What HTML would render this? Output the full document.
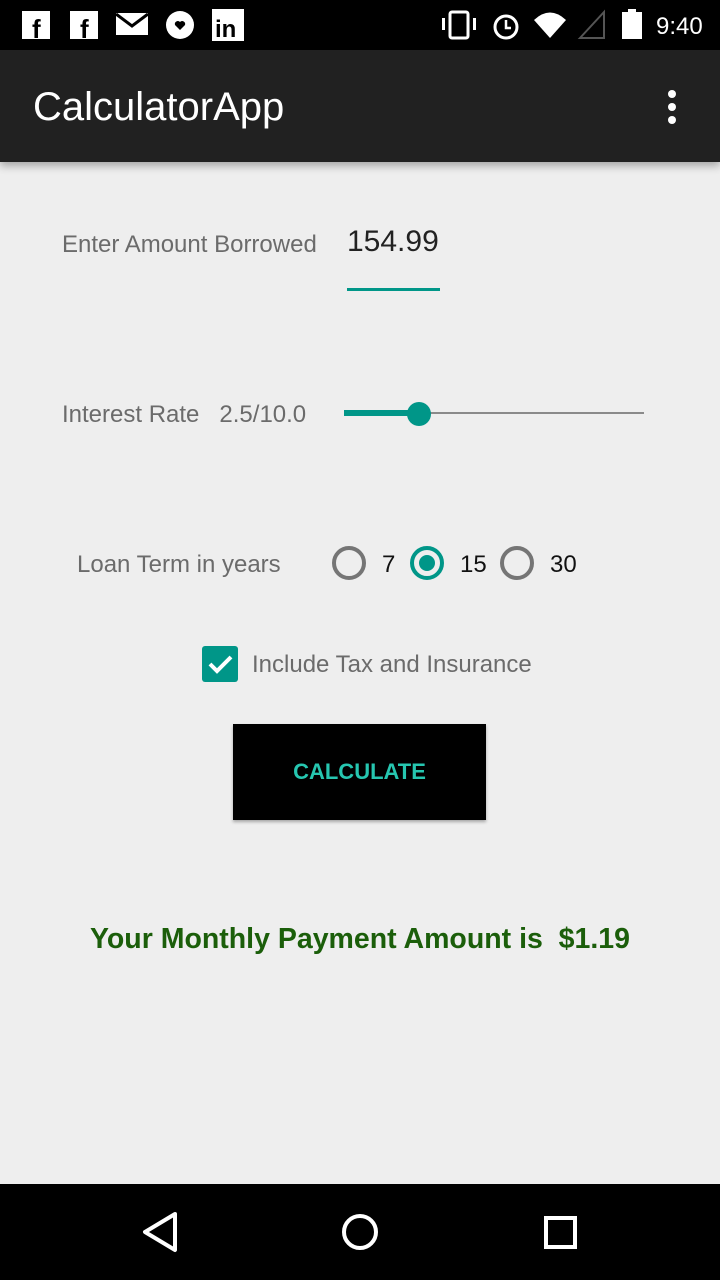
<!DOCTYPE html>
<html><head><style>
body{margin:0;width:720px;height:1280px;background:#eeeeee;font-family:"Liberation Sans",sans-serif;position:relative;overflow:hidden}
.a{position:absolute}
.radio{position:absolute;width:34px;height:34px;border-radius:50%;box-sizing:border-box;border:4px solid #757575}
</style></head><body>
<div class="a" style="left:0;top:0;width:720px;height:50px;background:#000"></div>
<svg class="a" style="left:0;top:0" width="720" height="50">
<rect x="22" y="11" width="28" height="28" fill="#fff"/><text x="32" y="38" font-size="26" font-weight="bold" fill="#000" font-family="Liberation Sans">f</text>
<rect x="70" y="11" width="28" height="28" fill="#fff"/><text x="80" y="38" font-size="26" font-weight="bold" fill="#000" font-family="Liberation Sans">f</text>
<rect x="116" y="13" width="32" height="22" fill="#fff"/><path d="M116 14 L132 26 L148 14" stroke="#000" stroke-width="3" fill="none"/>
<circle cx="180" cy="25" r="14" fill="#fff"/><path d="M180 30 l-5 -5 a3 3 0 0 1 5 -3 a3 3 0 0 1 5 3z" fill="#000"/>
<rect x="212" y="9" width="32" height="32" fill="#fff"/><text x="215" y="37" font-size="24" font-weight="bold" fill="#000" font-family="Liberation Sans">in</text>
<rect x="450" y="12" width="18" height="26" rx="2" fill="none" stroke="#fff" stroke-width="3"/><rect x="442" y="18" width="3" height="12" fill="#fff"/><rect x="473" y="18" width="3" height="12" fill="#fff"/>
<circle cx="506" cy="27" r="11" fill="none" stroke="#fff" stroke-width="3"/><path d="M506 20v8h5" stroke="#fff" stroke-width="2.5" fill="none"/>
<path d="M534 20 Q550 5 566 20 L550 38Z" fill="#fff"/>
<path d="M580 38 L604 12 V38Z" fill="none" stroke="#555" stroke-width="2"/>
<rect x="622" y="12" width="20" height="27" fill="#fff"/><rect x="628" y="9" width="8" height="4" fill="#fff"/>
<text x="656" y="34" font-size="24" fill="#fff" font-family="Liberation Sans">9:40</text>
</svg>
<div class="a" style="left:0;top:50px;width:720px;height:112px;background:#212121;box-shadow:0 4px 8px rgba(0,0,0,.3)"></div>
<div class="a" style="left:33px;top:85px;color:#fff;font-size:40px">CalculatorApp</div>
<div class="a" style="left:668px;top:90px;width:8px;height:8px;border-radius:50%;background:#fff;box-shadow:0 13px 0 #fff,0 26px 0 #fff"></div>
<div class="a" style="left:62px;top:231px;font-size:24px;color:#6b6b6b">Enter Amount Borrowed</div>
<div class="a" style="left:347px;top:225px;font-size:30px;color:#222">154.99</div>
<div class="a" style="left:347px;top:288px;width:93px;height:3px;background:#009688"></div>
<div class="a" style="left:62px;top:401px;font-size:24px;color:#6b6b6b">Interest Rate&nbsp;&nbsp; 2.5/10.0</div>
<div class="a" style="left:344px;top:412px;width:300px;height:2px;background:#8a8a8a"></div>
<div class="a" style="left:344px;top:410px;width:75px;height:6px;background:#009688"></div>
<div class="a" style="left:407px;top:402px;width:24px;height:24px;border-radius:50%;background:#009688"></div>
<div class="a" style="left:77px;top:551px;font-size:24px;color:#6b6b6b">Loan Term in years</div>
<div class="radio" style="left:332px;top:546px"></div>
<div class="a" style="left:382px;top:551px;font-size:24px;color:#111">7</div>
<div class="radio" style="left:410px;top:546px;border-color:#009688"></div>
<div class="a" style="left:419px;top:555px;width:16px;height:16px;border-radius:50%;background:#009688"></div>
<div class="a" style="left:460px;top:551px;font-size:24px;color:#111">15</div>
<div class="radio" style="left:500px;top:546px"></div>
<div class="a" style="left:550px;top:551px;font-size:24px;color:#111">30</div>
<div class="a" style="left:202px;top:646px;width:36px;height:36px;border-radius:3px;background:#009688"></div>
<svg class="a" style="left:202px;top:646px" width="36" height="36"><path d="M8 18 L15 25 L29 11" stroke="#fff" stroke-width="4" fill="none"/></svg>
<div class="a" style="left:252px;top:651px;font-size:24px;color:#6b6b6b">Include Tax and Insurance</div>
<div class="a" style="left:233px;top:724px;width:253px;height:96px;background:#000;box-shadow:0 2px 3px rgba(0,0,0,.3);color:#26c6b0;font-size:22px;font-weight:bold;text-align:center;line-height:96px">CALCULATE</div>
<div class="a" style="left:0;width:720px;top:923px;text-align:center;font-size:28.5px;font-weight:bold;color:#1b5e0a">Your Monthly Payment Amount is&nbsp; $1.19</div>
<div class="a" style="left:0;top:1184px;width:720px;height:96px;background:#000"></div>
<svg class="a" style="left:0;top:1184px" width="720" height="96">
<path d="M175 30 L145 48 L175 66Z" fill="none" stroke="#fff" stroke-width="4" stroke-linejoin="round"/>
<circle cx="360" cy="48" r="16" fill="none" stroke="#fff" stroke-width="4"/>
<rect x="546" y="34" width="29" height="29" fill="none" stroke="#fff" stroke-width="4"/>
</svg>
</body></html>
